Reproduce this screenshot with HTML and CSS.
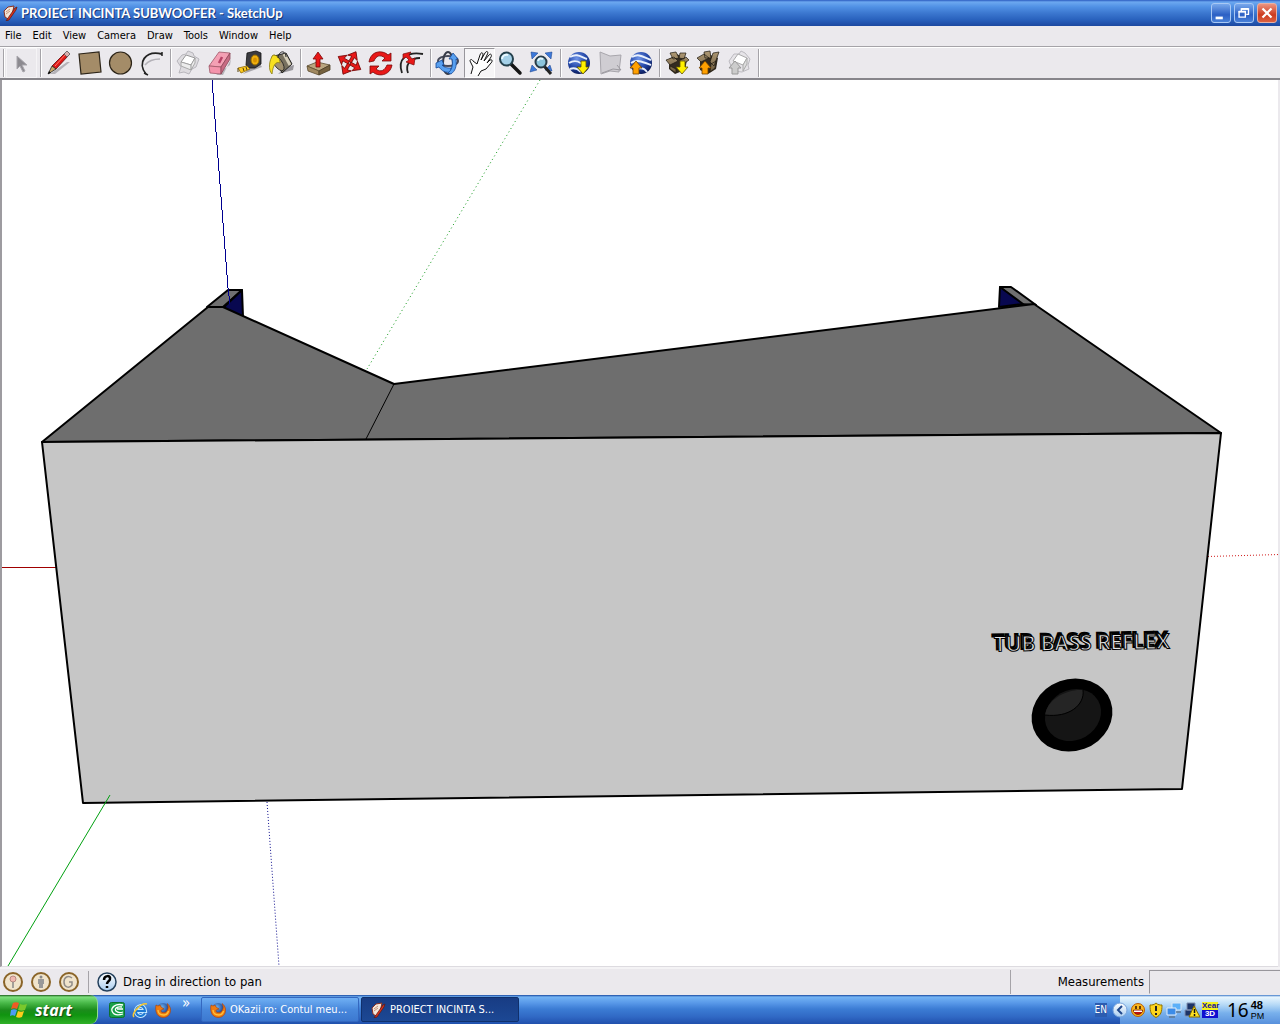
FILE: index.html
```
<!DOCTYPE html>
<html lang="en">
<head>
<meta charset="utf-8">
<title>PROIECT INCINTA SUBWOOFER - SketchUp</title>
<link rel="stylesheet" href="styles.css">
</head>
<body>
<svg class="defs" width="0" height="0" aria-hidden="true">
  <defs>
    <linearGradient id="box" x1="0" y1="0" x2="0" y2="1"><stop offset="0" stop-color="#b09a75"/><stop offset="1" stop-color="#6b5a3e"/></linearGradient>
    <radialGradient id="globe" cx=".4" cy=".3" r=".7"><stop offset="0" stop-color="#6f94e8"/><stop offset=".6" stop-color="#2347a8"/><stop offset="1" stop-color="#0c1c5c"/></radialGradient>
    <radialGradient id="orb" cx=".4" cy=".35" r=".7"><stop offset="0" stop-color="#6ab4f4"/><stop offset="1" stop-color="#102a78"/></radialGradient>
    <linearGradient id="ring" x1="0" y1="0" x2="0" y2="1"><stop offset="0" stop-color="#ffffff"/><stop offset="1" stop-color="#a9cdf0"/></linearGradient>
    <symbol id="sketchup" viewBox="0 0 16 16">
      <path d="M2 6l4-4 6-1-2 9-4 4-3-2z" fill="#f4e6da" stroke="#8a3020" stroke-width="1"/>
      <path d="M6 13L13 3l2-1-1 3-7 10-3 1z" fill="#d8321c" stroke="#5c1810" stroke-width=".7"/>
      <path d="M4 7l4-3M4 9l4-3" stroke="#c89478" stroke-width="1"/>
    </symbol>
    <symbol id="firefox" viewBox="0 0 16 16">
      <circle cx="8" cy="7" r="6" fill="url(#orb)"/>
      <path d="M1 3C0 8 1 15 8 15.500c6 0 8-5 7.500-8.500C15 4 13 2 12 1.500c1 2 1.500 3 1 5C12 10 10 11 8 10.500c-2 0-3-2-1-3l2-.5L6 5 5 3 3 4z" fill="#ee7b12" stroke="#a83c08" stroke-width=".6"/>
      <path d="M3 8c0 4 3 5 6 5 3-.3 4-2 4.500-4" fill="none" stroke="#ffc23a" stroke-width="1.300"/>
    </symbol>
    <symbol id="move-arm" viewBox="0 0 31 31">
      <path d="M14 14V8l-4 1 5.500-7L21 9l-4-1v6z" fill="#e81818" stroke="#780808" stroke-width=".8"/>
    </symbol>
  </defs>
</svg>

<header class="titlebar">
  <svg class="titlebar-icon" viewBox="0 0 16 16" aria-hidden="true"><use href="#sketchup"/></svg>
  <h1 class="titlebar-text">PROIECT INCINTA SUBWOOFER - SketchUp</h1>
  <div class="window-buttons">
    <button class="window-button" type="button" aria-label="Minimize"><svg viewBox="0 0 20 20"><rect x="4" y="14" width="8" height="3" fill="#fff"/></svg></button>
    <button class="window-button" type="button" aria-label="Restore"><svg viewBox="0 0 20 20"><path d="M7 8V5.500h8v6h-2.500" fill="none" stroke="#fff" stroke-width="1.500"/><path d="M4.500 8.500h7v6h-7z" fill="none" stroke="#fff" stroke-width="1.500"/><path d="M4 8.500h8M7 5.500h8" stroke="#fff" stroke-width="2"/></svg></button>
    <button class="window-button window-button-close" type="button" aria-label="Close"><svg viewBox="0 0 20 20"><path d="M5 5l10 10M15 5L5 15" stroke="#fff" stroke-width="2.500"/></svg></button>
  </div>
</header>

<nav class="menubar" aria-label="Main menu">
  <button type="button">File</button><button type="button">Edit</button><button type="button">View</button><button type="button">Camera</button><button type="button">Draw</button><button type="button">Tools</button><button type="button">Window</button><button type="button">Help</button>
</nav>

<div class="toolbar" role="toolbar" aria-label="Getting started">
  <div class="tool-group">
    <button class="tool tool-idle" type="button" aria-label="Select"><svg viewBox="0 0 31 31"><path d="M11 8v13l3-3 3 6 2-1-3-6h5z" fill="#8c8a90" stroke="#a9a7ad"/></svg></button>
  </div>
  <div class="tool-group">
    <button class="tool" type="button" aria-label="Line"><svg viewBox="0 0 31 31"><path d="M7 26l17-12 3 0L12 26z" fill="#b4b2b8"/><path d="M9 18L22 5l3 3-12 13z" fill="#e01818" stroke="#5c0808" stroke-width=".8"/><path d="M21 6l3-3 3 3-3 3z" fill="#d8b0b0" stroke="#555" stroke-width=".8"/><path d="M9 18l4 3-8 5z" fill="#c8a868" stroke="#222" stroke-width=".8"/><path d="M6 23l-1 3 3-1z" fill="#000"/><path d="M12 18L22 7" stroke="#ff7a6a" stroke-width="1"/></svg></button>
    <button class="tool" type="button" aria-label="Rectangle"><svg viewBox="0 0 31 31"><path d="M5 6l20-2 2 20-20 2z" fill="#a48c68" stroke="#2c2418" stroke-width="1.200"/></svg></button>
    <button class="tool" type="button" aria-label="Circle"><svg viewBox="0 0 31 31"><circle cx="15.500" cy="15" r="11" fill="#a48c68" stroke="#2c2418" stroke-width="1.200"/></svg></button>
    <button class="tool" type="button" aria-label="Arc"><svg viewBox="0 0 31 31"><path d="M9 17c4-5 9-6 15-6" fill="none" stroke="#b4b2b8" stroke-width="1.500"/><path d="M10 26C1 15 9 2 26 6" fill="none" stroke="#222" stroke-width="1.800"/><path d="M8 25l4 2M26 4l0 4" stroke="#222" stroke-width="1.500"/></svg></button>
  </div>
  <div class="tool-group">
    <button class="tool" type="button" aria-label="Make component"><svg viewBox="0 0 31 31"><path d="M4 13l5-6 4-1 2-3 5 2 1 3 5 3-3 8-4 2-3 5-5-2-5 1 2-6z" fill="#dedce0" stroke="#b8b6bc"/><path d="M13 7l9 3-4 7-10-3z" fill="#fff" stroke="#999"/><path d="M8 14v4l10 4 4-7v-5l-4 7z" fill="#ececec" stroke="#999" stroke-width=".8"/><path d="M18 17v5" stroke="#999"/></svg></button>
    <button class="tool" type="button" aria-label="Eraser"><svg viewBox="0 0 31 31"><path d="M12 27l14-10 1-6-8 16z" fill="#b4b2b8"/><path d="M15 4l11 1-9 14-12-1z" fill="#f4a0b4" stroke="#a05868" stroke-width=".8"/><path d="M5 18l12 1v7L6 25z" fill="#f494ac" stroke="#a05868" stroke-width=".8"/><path d="M17 19l9-14v6l-9 15z" fill="#c86c84" stroke="#8c4858" stroke-width=".8"/><path d="M18 9l-3 6" stroke="#b84468" stroke-width="2.500"/></svg></button>
    <button class="tool" type="button" aria-label="Tape measure"><svg viewBox="0 0 31 31"><path d="M8 26l19-7-2-3-10 4z" fill="#a8a6ac"/><path d="M12 5l9-2 5 2v11l-6 4h-7l-2-3z" fill="#3b3b40" stroke="#111" stroke-width=".8"/><ellipse cx="20" cy="12" rx="4" ry="5" fill="#f0b010" stroke="#986c00"/><ellipse cx="20" cy="12" rx="2" ry="2.500" fill="#d89000"/><path d="M3 20l9-2 3 3-9 4z" fill="#fcc81c" stroke="#8c6808" stroke-width=".8"/><path d="M3 20v4M8 20l1 3M11 19l1 3" stroke="#554008"/></svg></button>
    <button class="tool" type="button" aria-label="Paint bucket"><svg viewBox="0 0 31 31"><path d="M12 26l15-4 1-5-8 2z" fill="#98969c"/><path d="M8 8L20 5l6 11-10 9z" fill="#77705f" stroke="#222"/><path d="M18 6l6 11" stroke="#d4cdb8" stroke-width="3"/><ellipse cx="12" cy="15" rx="4" ry="9" transform="rotate(-35 12 15)" fill="#a09070" stroke="#222" stroke-width=".8"/><path d="M7 7c4 0 7 3 7 8-4-2-7 2-8 11-4-4-3-14 1-19z" fill="#f8e020" stroke="#8a7c10" stroke-width=".8"/><path d="M12 10C13 2 20 2 20 9" fill="none" stroke="#222"/></svg></button>
  </div>
  <div class="tool-group">
    <button class="tool" type="button" aria-label="Push/Pull"><svg viewBox="0 0 31 31"><path d="M4 18l10-4 13 3-11 6z" fill="#baa680" stroke="#5c4c30" stroke-width=".8"/><path d="M4 18l12 5v4L5 23z" fill="#a08860" stroke="#5c4c30" stroke-width=".8"/><path d="M16 23l11-6v5l-11 5z" fill="#75613f" stroke="#4a3c24" stroke-width=".8"/><path d="M15 4l5 7h-3v8h-4v-8h-3z" fill="#e81818" stroke="#780808" stroke-width=".8"/></svg></button>
    <button class="tool" type="button" aria-label="Move"><svg viewBox="0 0 31 31"><g transform="rotate(30 15.500 15)"><use href="#move-arm" width="31" height="31"/><use href="#move-arm" width="31" height="31" transform="rotate(90 15.500 15)"/><use href="#move-arm" width="31" height="31" transform="rotate(180 15.500 15)"/><use href="#move-arm" width="31" height="31" transform="rotate(270 15.500 15)"/></g></svg></button>
    <button class="tool" type="button" aria-label="Rotate"><svg viewBox="0 0 31 31"><path d="M4 14C6 2 18 2 23 7l3-2v8h-9l3-3c-5-4-9-2-11 3z" fill="#e81818" stroke="#780808" stroke-width=".8"/><path d="M27 17c-2 11-14 12-19 7l-3 2v-8h9l-3 3c5 4 9 1 11-4z" fill="#e81818" stroke="#780808" stroke-width=".8"/></svg></button>
    <button class="tool" type="button" aria-label="Offset"><svg viewBox="0 0 31 31"><path d="M6 25C1 11 11 3 27 6M12 25c-3-8 2-15 12-15" fill="none" stroke="#222" stroke-width="1.800"/><path d="M7 6l8-2-2 3 3 4 3-1-1 7-8-3 3-2-3-3-3 2z" fill="#e81818" stroke="#780808" stroke-width=".7"/></svg></button>
  </div>
  <div class="tool-group">
    <button class="tool" type="button" aria-label="Orbit"><svg viewBox="0 0 31 31"><ellipse cx="15" cy="13" rx="10" ry="5" fill="none" stroke="#484c5c" stroke-width="2"/><ellipse cx="15" cy="15" rx="5" ry="11" fill="none" stroke="#383c48" stroke-width="2"/><path d="M3 15l6-3 2 5-2 0c3 3 6 3 9 3v4c-6 1-9-1-12-5l-3 1z" fill="#58a0f0" stroke="#144898" stroke-width=".8"/><path d="M15 25c4-3 5-8 4-14h-3l4-6 5 6h-2c1 8-1 12-5 15z" fill="#58a0f0" stroke="#144898" stroke-width=".8"/></svg></button>
    <button class="tool tool-pressed" type="button" aria-label="Pan" aria-pressed="true"><svg viewBox="0 0 31 31"><path d="M7 26l2-7-3-6c0-2 2-2 3 0l4 3 3-9c1-3 3-3 3 0l-2 5 4-7c2-3 4-1 2 2l-3 6 5-6c2-2 3 0 2 2l-4 6 3-3c2-1 3 1 1 3l-5 6-5 2-3 5" fill="#fff" stroke="#111" stroke-width="1"/></svg></button>
    <button class="tool" type="button" aria-label="Zoom"><svg viewBox="0 0 31 31"><path d="M16 16l9 9" stroke="#151515" stroke-width="3.500" stroke-linecap="round"/><circle cx="11.500" cy="11" r="6.500" fill="#a4d0e8" stroke="#24404c" stroke-width="2"/><path d="M7 11c0-3 3-5 6-4" fill="none" stroke="#e8f8ff" stroke-width="2"/></svg></button>
    <button class="tool" type="button" aria-label="Zoom extents"><svg viewBox="0 0 31 31"><path d="M5 4l7 1-6 6zM26 4l-7 1 6 6zM4 24l7-2-5-5zM26 23l-7-1 5-5z" fill="#3c78d8" stroke="#143c88" stroke-width=".5"/><path d="M18 18l7 8" stroke="#222" stroke-width="3"/><circle cx="15" cy="14" r="5.500" fill="#8cc4dc" stroke="#283c48" stroke-width="2"/><path d="M12 13c1-3 3-3 5-2" fill="none" stroke="#e8f8ff" stroke-width="2"/></svg></button>
  </div>
  <div class="tool-group">
    <button class="tool" type="button" aria-label="Get current view"><svg viewBox="0 0 31 31"><circle cx="16" cy="15" r="11" fill="url(#globe)"/><path d="M7 9c7-4 11 0 17 2M6 15c6-4 12-1 16 4M7 21c5-2 8 0 11 3" fill="none" stroke="#e8f0fc" stroke-width="2"/><path d="M18 13h5v6h3l-6 7-6-7h4z" fill="#fff000" stroke="#605000" stroke-width=".8"/></svg></button>
    <button class="tool" type="button" aria-label="Toggle terrain"><svg viewBox="0 0 31 31"><path d="M6 4l10 4 11-1-2 17-9-1-9 3z" fill="#cfcdd2" stroke="#a8a6ac"/><path d="M8 25l11-4 8 1-4-5" fill="none" stroke="#9c9aa0"/></svg></button>
    <button class="tool" type="button" aria-label="Place model"><svg viewBox="0 0 31 31"><circle cx="16" cy="15" r="11" fill="url(#globe)"/><path d="M7 9c7-4 11 0 19 3M6 15c6-4 12-1 20 2M12 21c5-2 8 0 10 3" fill="none" stroke="#e8f0fc" stroke-width="2"/><path d="M8 26v-6H5l6-7 6 7h-3v6z" fill="#ffa000" stroke="#704000" stroke-width=".8"/></svg></button>
  </div>
  <div class="tool-group">
    <button class="tool" type="button" aria-label="Get models"><svg viewBox="0 0 31 31"><path d="M7 11l8-5 10 6-2 10-10 4-6-5z" fill="#332b20"/><path d="M4 12l8-3 4 4-8 4zM8 5l6-1 3 6-6 1zM18 5h6l-2 6-5-1zM17 13l7-4 3 3-7 5zM8 18l6 3v4l-6-4z" fill="url(#box)" stroke="#1c1810" stroke-width=".7"/><path d="M18 13h5v6h3l-6 7-6-7h4z" fill="#fff000" stroke="#605000" stroke-width=".8"/></svg></button>
    <button class="tool" type="button" aria-label="Share model"><svg viewBox="0 0 31 31"><path d="M7 11l8-5 10 4-2 11-8 5-8-4z" fill="#332b20"/><path d="M4 10l7-4 5 4-8 4zM11 4l6-1 1 7-6 0zM20 5l6-1-5 14-4-4zM18 16l5-3-1 7-5 4z" fill="url(#box)" stroke="#1c1810" stroke-width=".7"/><path d="M9 26v-6H6l6-7 6 7h-3v6z" fill="#ffa000" stroke="#704000" stroke-width=".8"/></svg></button>
    <button class="tool" type="button" aria-label="Share component"><svg viewBox="0 0 31 31"><path d="M5 13l5-7h5l2-3 4 2 5 6-2 6 1 4-7 3-9-1z" fill="#e6e4e8" stroke="#bcbac0"/><path d="M14 6l9 4-4 7-10-4z" fill="#fff" stroke="#aaa"/><path d="M19 17l4-7v6l-4 7z" fill="#ddd" stroke="#aaa"/><path d="M8 26v-6H5l6-7 6 7h-3v6z" fill="#ccc" stroke="#999"/></svg></button>
  </div>
</div>

<main class="viewport">
  <svg class="scene" viewBox="2 80 1276 886" preserveAspectRatio="xMidYMid slice" role="img" aria-label="Subwoofer box model">
    <g fill="none">
      <path d="M540 80L367 369" stroke="#109818" stroke-dasharray="1 3"/>
      <path d="M1208 556.500L1280 554.500" stroke="#d01818" stroke-dasharray="1 2"/>
      <path d="M2 567.500h54" stroke="#a00000"/>
      <path d="M267 802l12 164" stroke="#101090" stroke-dasharray="1 2"/>
    </g>
    <g stroke="#000" stroke-width="2" stroke-linejoin="round">
      <path d="M207 307l21-17h14l-19 17z" fill="#707070"/>
      <path d="M242 290l1 27-20-9z" fill="#080850"/>
      <path d="M1000 287h11l25 18-16-1z" fill="#707070"/>
      <path d="M1000 287l-1 20 24-3z" fill="#080850"/>
      <path d="M42 442L208 307h15L394 384l640-80L1221 433z" fill="#6e6e6e"/>
      <path d="M42 442L1221 433 1182 789 83 803z" fill="#c6c6c6"/>
    </g>
    <path d="M394 384l-28 55" stroke="#000" fill="none"/>
    <path d="M212 80l16 208 2 16" stroke="#000090" fill="none" shape-rendering="crispEdges"/>
    <path d="M110 795L8 966" stroke="#00a010" fill="none"/>
    <g class="engraving" transform="rotate(-1 1081 641)">
      <text class="engraving-side" x="992" y="648">TUB BASS REFLEX</text>
      <text class="engraving-face" x="994" y="650">TUB BASS REFLEX</text>
    </g>
    <ellipse cx="1072" cy="715" rx="41" ry="36" transform="rotate(-20 1072 715)" fill="#000"/>
    <ellipse cx="1073" cy="715" rx="29" ry="25" transform="rotate(-30 1073 715)" fill="#151515"/>
    <path d="M1045 715c2-15 20-26 38-25 2 14-14 28-38 25z" fill="#252525"/>
    <path d="M1045 715c24 3 40-10 38-25" fill="none" stroke="#000"/>
  </svg>
</main>

<footer class="statusbar">
  <div class="status-badges">
    <svg viewBox="0 0 22 22" aria-label="Geo-location"><circle cx="11" cy="11" r="9" fill="#f0e4cc" stroke="#8a6428" stroke-width="2"/><circle cx="11" cy="8" r="3" fill="#f0b8b0" stroke="#b88880"/><path d="M11 11v6" stroke="#888" stroke-width="1.500"/></svg>
    <svg viewBox="0 0 22 22" aria-label="Credits"><circle cx="11" cy="11" r="9" fill="#f0e4cc" stroke="#8a6428" stroke-width="2"/><circle cx="11" cy="6" r="1.500" fill="#888"/><path d="M8 8h6v5h-1v4H9v-4H8z" fill="#999"/></svg>
    <svg viewBox="0 0 22 22" aria-label="Sign in"><circle cx="11" cy="11" r="9" fill="#f0e4cc" stroke="#8a6428" stroke-width="2"/><path d="M14 7c-4-3-8-1-8 4s5 7 8 3v-3h-3" fill="none" stroke="#908c88" stroke-width="1.500"/></svg>
  </div>
  <div class="status-help">
    <svg viewBox="0 0 22 22" aria-label="Help"><circle cx="11" cy="11" r="9" fill="url(#ring)" stroke="#24405c" stroke-width="1.500"/><path d="M8 9c0-5 7-5 6-1 0 2-3 2-3 5M11 15v2" fill="none" stroke="#000" stroke-width="2.500"/></svg>
    <span>Drag in direction to pan</span>
  </div>
  <div class="status-measure">
    <label for="measurements">Measurements</label>
    <input id="measurements" type="text">
  </div>
</footer>

<nav class="taskbar" aria-label="Taskbar">
  <button class="start" type="button">
    <svg viewBox="0 0 18 18" aria-hidden="true"><path d="M3 2c2-1 4-1 6 0L7 8c-2-1-4-1-6 0z" fill="#f05a24"/><path d="M10 3c2 1 4 1 7 0l-2 6c-2 1-5 1-7 0z" fill="#7ac82c"/><path d="M1 9c2-1 4-1 6 0l-2 6c-2-1-3-1-5 0z" fill="#4c9cf4"/><path d="M8 10c2 1 4 1 6 0l-2 6c-2 1-4 1-6 0z" fill="#fccc1c"/></svg>
    <span>start</span>
  </button>
  <div class="quick-launch">
    <a href="#" aria-label="Camtasia"><svg viewBox="0 0 16 16"><rect x=".5" y=".5" width="15" height="15" rx="2" fill="#18a048" stroke="#0c7030"/><path d="M14 3C6 1 2 6 3 9s4 5 11 3M13 5C8 4 5 7 7 9s4 2 7 1M8 7h6" fill="none" stroke="#fff" stroke-width="1.300"/></svg></a>
    <a href="#" aria-label="Internet Explorer"><svg viewBox="0 0 16 16"><path d="M13 11c-3 5-9 3-9-2s8-8 9 0H5" fill="none" stroke="#c4e8ff" stroke-width="4"/><path d="M13 11c-3 5-9 3-9-2s8-8 9 0H5" fill="none" stroke="#1c78d4" stroke-width="2"/><path d="M2 15C-1 12 9 0 15 2" fill="none" stroke="#f8c830" stroke-width="1.500"/></svg></a>
    <a href="#" aria-label="Firefox"><svg viewBox="0 0 16 16"><use href="#firefox"/></svg></a>
  </div>
  <span class="more">»</span>
  <div class="tasks">
    <button class="task" type="button"><svg viewBox="0 0 16 16" aria-hidden="true"><use href="#firefox"/></svg><span>OKazii.ro: Contul meu...</span></button>
    <button class="task task-active" type="button"><svg viewBox="0 0 16 16" aria-hidden="true"><use href="#sketchup"/></svg><span>PROIECT INCINTA S...</span></button>
  </div>
  <span class="language">EN</span>
  <div class="tray">
    <svg class="tray-toggle" viewBox="0 0 16 16" aria-label="Show hidden icons"><circle cx="8" cy="8" r="7" fill="url(#ring)" stroke="#78a4dc"/><path d="M10 4L6 8l4 4" fill="none" stroke="#20488c" stroke-width="2"/></svg>
    <svg viewBox="0 0 16 16" aria-label="Messenger"><circle cx="8" cy="8" r="6.500" fill="#fcb81c" stroke="#b85c08"/><path d="M3.500 8h9c0 6-9 6-9 0z" fill="#c01010" stroke="#501000" stroke-width=".6"/><path d="M4 8.500h8v1.500H4z" fill="#fff"/><path d="M6 4v3M10 4v3" stroke="#301000" stroke-width="1.500"/></svg>
    <svg viewBox="0 0 16 16" aria-label="Security alert"><path d="M8 1c2 2 4 2 6 2 0 7-1 10-6 12.500C3 13 2 10 2 3c2 0 4 0 6-2z" fill="#fcd41c" stroke="#907000"/><path d="M8 4v5M8 11v2" stroke="#222" stroke-width="2"/></svg>
    <svg viewBox="0 0 16 16" aria-label="Network"><path d="M6 1h9v7H6z" fill="#5cb0f8" stroke="#dce8f4"/><path d="M1 6h9v7H1z" fill="#3c8ce8" stroke="#e4eef8"/><path d="M3 15h6M10 10h5" stroke="#607890" stroke-width="1.500"/></svg>
    <svg viewBox="0 0 16 16" aria-label="Network warning"><path d="M3 1h8v7H3zM1 8h7v6H1z" fill="#1c3468" stroke="#8090b0"/><path d="M10 4l6 11H5z" fill="#fce020" stroke="#806800"/><path d="M10.500 7v4M10.500 12v2" stroke="#111" stroke-width="1.500"/></svg>
    <span class="xear" aria-label="Xear 3D"><b>Xear</b><b class="xear-3d">3D</b></span>
    <time class="clock"><span>16</span><span class="clock-side"><b>48</b><small>PM</small></span></time>
  </div>
</nav>
</body>
</html>
```

FILE: styles.css
```
*, *::before, *::after { box-sizing: border-box; }

body {
  margin: 0;
  height: 100vh;
  display: flex;
  flex-direction: column;
  overflow: hidden;
  background: #ebe9ed;
  color: #000;
  font: 11px/14px "DejaVu Sans Condensed", "DejaVu Sans", sans-serif;
}

button, input { font: inherit; color: inherit; border: 0; padding: 0; background: none; }
svg { display: block; flex: none; }
.defs { position: absolute; }

/* Title bar */
.titlebar {
  flex: none;
  height: 26px;
  display: flex;
  align-items: center;
  gap: 3px;
  padding: 0 3px 0 2px;
  background: linear-gradient(#2c5cc0 0, #6ca8f0 2px, #5090e4 7px, #3c78d0 13px, #2860bc 20px, #1c48a0 100%);
}
.titlebar-icon { width: 16px; height: 16px; }
.titlebar-text {
  flex: 1;
  margin: 0;
  color: #fff;
  font: bold 13px/16px Lato, sans-serif;
  text-shadow: 1px 1px 0 #183878;
}
.window-buttons { display: flex; gap: 3px; }
.window-button {
  width: 20px;
  height: 20px;
  border: 1px solid #a8c8f4;
  border-radius: 3px;
  background: linear-gradient(#78a8ec, #2c60c4 60%, #4880d8);
}
.window-button svg { width: 18px; height: 18px; }
.window-button-close { border-color: #e8b0a4; background: linear-gradient(#ec9480, #cc3c20 60%, #dc6040); }

/* Menu bar */
.menubar {
  flex: none;
  height: 21px;
  display: flex;
  align-items: center;
  border-bottom: 1px solid #a5a3a8;
}
.menubar button { padding: 0 6px 0 5px; }

/* Toolbar */
.toolbar {
  flex: none;
  height: 33px;
  display: flex;
  align-items: center;
  border-top: 1px solid #fff;
  border-bottom: 2px solid #87858b;
}
.tool-group { display: flex; align-items: center; }
.tool-group::before,
.tool-group:last-child::after {
  content: "";
  width: 2px;
  height: 28px;
  margin: 0 1px 0 3px;
  border-left: 1px solid #a5a3a8;
  border-right: 1px solid #fff;
}
.tool { width: 31px; height: 30px; }
.tool svg { width: 31px; height: 31px; }
.tool-idle { outline: 1px solid #f5f4f6; outline-offset: -1px; }
.tool-pressed {
  border: 1px solid #fff;
  border-top-color: #98969c;
  border-left-color: #98969c;
  background: #f6f5f7;
}
.tool-pressed svg { margin: -1px; }

/* Drawing area */
.viewport {
  flex: 1;
  min-height: 0;
  border: solid #9d9ba0;
  border-width: 0 0 0 2px;
  border-bottom: 1px solid #dddbe0;
  margin-right: 2px;
  background: #fff;
}
.scene { width: 100%; height: 100%; }
.engraving text { font: 600 21px "Open Sans", sans-serif; stroke: #000; }
.engraving .engraving-side { fill: #777; stroke-width: 2px; }
.engraving .engraving-face { fill: #e4e4e4; stroke: #000; stroke-width: 1px; }

/* Status bar */
.statusbar {
  flex: none;
  height: 28px;
  display: flex;
  align-items: center;
  padding-left: 2px;
  border-top: 2px solid #f4f3f5;
  font-size: 13px;
  line-height: 16px;
}
.statusbar svg { width: 22px; height: 22px; }
.status-badges { display: flex; gap: 6px; padding-right: 8px; }
.status-help {
  flex: 1;
  display: flex;
  align-items: center;
  gap: 5px;
  padding-left: 7px;
  border-left: 1px solid #a5a3a8;
}
.status-measure {
  width: 270px;
  display: flex;
  align-items: center;
  justify-content: flex-end;
  gap: 5px;
  border-left: 1px solid #a5a3a8;
}
.status-measure input {
  width: 131px;
  height: 24px;
  border: 1px solid #98969c;
  border-right: 0;
  border-bottom-color: #ebe9ed;
}

/* Taskbar */
.taskbar {
  flex: none;
  height: 29px;
  display: flex;
  align-items: stretch;
  color: #fff;
  background: linear-gradient(#1848a0 0, #74b4f4 2px, #5898e8 8px, #3c7cd4 14px, #3068c4 22px, #2050ac 100%);
}
.start {
  width: 98px;
  display: flex;
  align-items: center;
  gap: 7px;
  padding-left: 10px;
  border-right: 1px solid #94dc8c;
  border-radius: 0 8px 8px 0;
  background: linear-gradient(#1c5c1c 0, #7ce07c 2px, #48b848 8px, #1c8c1c 15px, #109410 20px, #30b028 100%);
  font: italic bold 16px/20px "Open Sans", sans-serif;
  text-shadow: 1px 1px 1px #184818;
}
.start svg { width: 18px; height: 18px; }
.quick-launch { display: flex; align-items: center; gap: 7px; padding-left: 11px; }
.quick-launch svg { width: 16px; height: 16px; }
.more { width: 30px; padding: 1px 0 0 11px; font-size: 15px; }
.tasks { flex: 1; display: flex; gap: 2px; padding: 2px 0; }
.task {
  width: 158px;
  display: flex;
  align-items: center;
  gap: 4px;
  padding-left: 8px;
  border: 1px solid #3468c0;
  border-radius: 2px;
  background: linear-gradient(#70b0f4, #4888dc 50%, #3c78d0);
  white-space: nowrap;
}
.task svg { width: 16px; height: 16px; }
.task-active { border-color: #10306c; background: linear-gradient(#183c84, #1c4894); }
.language { align-self: center; margin-right: 13px; background: #2c5cb0; font-size: 10px; }
.tray {
  width: 160px;
  display: flex;
  align-items: center;
  gap: 2px;
  color: #000;
  background: linear-gradient(#3c78c8 0, #e8f6fe 2px, #b4d8f6 10px, #78b0ec 18px, #5890dc 100%);
}
.tray svg { width: 16px; height: 16px; }
.tray .tray-toggle { margin-left: -8px; }
.xear {
  width: 16px;
  display: flex;
  flex-direction: column;
  background: #f4f01c;
  color: #1010a0;
  font: 8px/8px "Liberation Sans", sans-serif;
  text-align: center;
}
.xear b { height: 8px; }
.xear-3d { background: #1010d0; color: #fff; }
.clock { display: flex; align-items: center; gap: 2px; padding-left: 7px; font: 19px/22px "Noto Sans", sans-serif; }
.clock-side { display: flex; flex-direction: column; font: 11px/12px "Liberation Sans", sans-serif; }
.clock-side small { font-size: 9px; line-height: 10px; }
```
